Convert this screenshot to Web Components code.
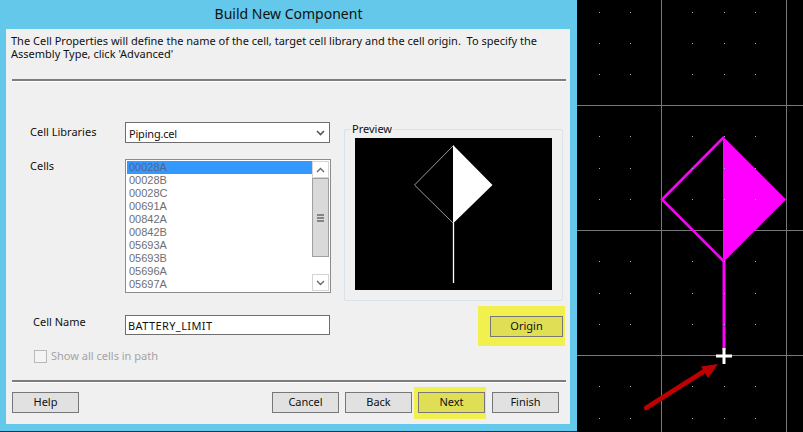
<!DOCTYPE html>
<html>
<head>
<meta charset="utf-8">
<title>Build New Component</title>
<style>
  html, body { margin: 0; padding: 0; background: #2a2a2a; }
  body { font: 11px/13px "Noto Sans", "Open Sans", sans-serif; color: #111; overflow: hidden; }
</style>
</head>
<body>
<x-app>
  <x-dialog title="Build New Component">
    <span slot="intro">The Cell Properties will define the name of the cell, target cell library and the cell origin.&nbsp; To specify the<br>Assembly Type, click 'Advanced'</span>

    <x-field slot="left" label="Cell Libraries" style="height:21px;margin-bottom:16px;--label-top:3px"><x-select>Piping.cel</x-select></x-field>
    <x-field slot="left" label="Cells" style="height:134px;margin-bottom:22px;--label-top:0px">
      <x-listbox>
        <x-listitem selected>00028A</x-listitem>
        <x-listitem>00028B</x-listitem>
        <x-listitem>00028C</x-listitem>
        <x-listitem>00691A</x-listitem>
        <x-listitem>00842A</x-listitem>
        <x-listitem>00842B</x-listitem>
        <x-listitem>05693A</x-listitem>
        <x-listitem>05693B</x-listitem>
        <x-listitem>05696A</x-listitem>
        <x-listitem>05697A</x-listitem>
      </x-listbox>
    </x-field>
    <x-field slot="left" label="Cell Name" indent style="height:20px;margin-bottom:15px;--label-top:0px"><x-textbox>BATTERY_LIMIT</x-textbox></x-field>
    <x-checkbox slot="left">Show all cells in path</x-checkbox>

    <x-groupbox slot="right" label="Preview"><x-preview></x-preview></x-groupbox>
    <x-highlight slot="right" style="margin:5px 0 0 134px;padding:10px 2px 9px 12px">
      <x-button marked style="width:73px">Origin</x-button>
    </x-highlight>

    <x-button slot="footer" style="margin-right:193px">Help</x-button>
    <x-button slot="footer" style="margin-right:6px">Cancel</x-button>
    <x-button slot="footer" style="margin-right:6px">Back</x-button>
    <x-highlight slot="footer" style="margin:-5px 6px -6px -4px;padding:5px 1px 6px 4px">
      <x-button marked>Next</x-button>
    </x-highlight>
    <x-button slot="footer">Finish</x-button>
  </x-dialog>
  <x-canvas></x-canvas>
</x-app>

<script>
class XApp extends HTMLElement {
  constructor() {
    super();
    this.attachShadow({ mode: 'open' }).innerHTML = `
      <style>
        :host { display: flex; width: 803px; height: 432px; overflow: hidden; }
      </style>
      <slot></slot>`;
  }
}

class XDialog extends HTMLElement {
  constructor() {
    super();
    this.attachShadow({ mode: 'open' }).innerHTML = `
      <style>
        :host {
          display: flex; flex-direction: column; box-sizing: border-box;
          width: 577px; height: 431px; flex: none;
          padding: 0 7px 7px 6px; background: #63c8ea;
        }
        .title {
          height: 29px; line-height: 28px; text-align: center;
          font-size: 14px; color: #111; padding-left: 1px;
        }
        .panel { flex: 1; display: flex; flex-direction: column; background: #f0f0f0; }
        .intro { height: 26px; margin: 5px 5px 0; white-space: nowrap; }
        .rule { height: 2px; background: #7d7d7d; border-bottom: 1px solid #fff; margin: 19px 4px 0 6px; flex: none; }
        .form { flex: 1; display: flex; padding: 40px 0 0 24px; min-height: 0; }
        .left { width: 301px; flex: none; }
        .right { margin: 7px 0 0 13px; width: 221px; flex: none; }
        .footer { display: flex; height: 21px; padding: 9px 0 11px 6px; }
      </style>
      <div class="title">${this.getAttribute('title')}</div>
      <div class="panel">
        <div class="intro"><slot name="intro"></slot></div>
        <div class="rule"></div>
        <div class="form">
          <div class="left"><slot name="left"></slot></div>
          <div class="right"><slot name="right"></slot></div>
        </div>
        <div class="rule" style="margin-top:0"></div>
        <div class="footer"><slot name="footer"></slot></div>
      </div>`;
  }
}

class XField extends HTMLElement {
  constructor() {
    super();
    const pad = this.hasAttribute('indent') ? 3 : 0;
    this.attachShadow({ mode: 'open' }).innerHTML = `
      <style>
        :host { display: flex; }
        .label { width: ${95 - pad}px; margin-left: ${pad}px; padding-top: var(--label-top, 0); flex: none; }
        .control { width: 206px; height: 100%; }
      </style>
      <div class="label">${this.getAttribute('label')}</div>
      <div class="control"><slot></slot></div>`;
  }
}

class XSelect extends HTMLElement {
  constructor() {
    super();
    this.attachShadow({ mode: 'open' }).innerHTML = `
      <style>
        :host {
          display: flex; align-items: center; justify-content: space-between; box-sizing: border-box;
          width: 205px; height: 21px; padding: 1px 4px 0 3px;
          background: #fff; border: 1px solid #6e6e6e; letter-spacing: -.2px;
        }
        svg { display: block; }
      </style>
      <span><slot></slot></span>
      <svg width="9" height="6" viewBox="0 0 9 6"><path d="M1 1l3.5 3.5L8 1" fill="none" stroke="#555" stroke-width="1.6"/></svg>`;
  }
}

class XListbox extends HTMLElement {
  constructor() {
    super();
    this.attachShadow({ mode: 'open' }).innerHTML = `
      <style>
        :host {
          display: flex; box-sizing: border-box; width: 206px; height: 134px;
          padding: 1px; background: #fff; border: 1px solid #8c8c8c;
        }
        .items { flex: 1; min-width: 0; }
        .bar { width: 17px; flex: none; display: flex; flex-direction: column; }
        .btn { height: 17px; box-sizing: border-box; display: flex; align-items: center; justify-content: center; border: 1px solid #d4d4d4; }
        .thumb {
          height: 79px; box-sizing: border-box; background: #d9d9d9; border: 1px solid #a0a0a0;
          display: flex; align-items: center; justify-content: center;
        }
        .track { flex: 1; }
        svg { display: block; }
      </style>
      <div class="items"><slot></slot></div>
      <div class="bar">
        <div class="btn"><svg width="9" height="6" viewBox="0 0 9 6"><path d="M1 5l3.5-3.5L8 5" fill="none" stroke="#666" stroke-width="1.3"/></svg></div>
        <div class="thumb"><svg width="7" height="8" viewBox="0 0 7 8"><path d="M0 1h7M0 4h7M0 7h7" stroke="#6a6a6a" stroke-width="1.6"/></svg></div>
        <div class="track"></div>
        <div class="btn"><svg width="9" height="6" viewBox="0 0 9 6"><path d="M1 1l3.5 3.5L8 1" fill="none" stroke="#666" stroke-width="1.3"/></svg></div>
      </div>`;
  }
}

class XListitem extends HTMLElement {
  constructor() {
    super();
    this.attachShadow({ mode: 'open' }).innerHTML = `
      <style>
        :host {
          display: block; height: 13px; line-height: 13px; padding-left: 2px;
          font-family: "Liberation Sans", sans-serif; font-size: 11px; color: #6f6f72;
        }
        :host([selected]) { background: #3399ff; color: #56657d; }
      </style>
      <slot></slot>`;
  }
}

class XTextbox extends HTMLElement {
  constructor() {
    super();
    this.attachShadow({ mode: 'open' }).innerHTML = `
      <style>
        :host {
          display: flex; align-items: center; box-sizing: border-box;
          width: 205px; height: 20px; padding: 1px 0 0 2px;
          background: #fff; border: 1px solid #6e6e6e; letter-spacing: .4px;
        }
      </style>
      <slot></slot>`;
  }
}

class XCheckbox extends HTMLElement {
  constructor() {
    super();
    this.attachShadow({ mode: 'open' }).innerHTML = `
      <style>
        :host { display: flex; align-items: center; height: 13px; margin-left: 4px; color: #a3a3a3; }
        .box { width: 13px; height: 13px; box-sizing: border-box; border: 1px solid #b9b9b9; background: #f4f4f4; margin-right: 4px; flex: none; }
        span { margin-top: -2px; }
      </style>
      <div class="box"></div>
      <span><slot></slot></span>`;
  }
}

class XGroupbox extends HTMLElement {
  constructor() {
    super();
    this.attachShadow({ mode: 'open' }).innerHTML = `
      <style>
        :host { display: block; width: 219px; height: 172px; position: relative; box-sizing: border-box; border: 1px solid #d8e2e8; border-radius: 2px; }
        .label { position: absolute; left: 6px; top: -8px; padding: 0 1px; background: #f0f0f0; }
        .body { padding: 8px 10px 10px 10px; }
      </style>
      <div class="label">${this.getAttribute('label')}</div>
      <div class="body"><slot></slot></div>`;
  }
}

class XPreview extends HTMLElement {
  constructor() {
    super();
    this.attachShadow({ mode: 'open' }).innerHTML = `
      <style>
        :host { display: block; width: 197px; height: 152px; background: #000; }
        svg { display: block; }
      </style>
      <svg width="197" height="152" viewBox="0 0 197 152">
        <path d="M98.5 7.5L59.5 47l39 38.5" fill="none" stroke="#9a9a9a" stroke-width="1"/>
        <path d="M98 7L137.500 47 98 85.500z" fill="#fff"/>
        <path d="M98.500 85V145" stroke="#fff" stroke-width="1.300"/>
      </svg>`;
  }
}

class XHighlight extends HTMLElement {
  constructor() {
    super();
    this.attachShadow({ mode: 'open' }).innerHTML = `
      <style>
        :host { display: block; width: fit-content; background: #f2f04e; }
      </style>
      <slot></slot>`;
  }
}

class XButton extends HTMLElement {
  constructor() {
    super();
    this.attachShadow({ mode: 'open' }).innerHTML = `
      <style>
        :host {
          display: flex; align-items: center; justify-content: center; box-sizing: border-box;
          width: 67px; height: 21px; flex: none; padding-bottom: 2px;
          background: #e1e1e1; border: 1px solid #777; color: #111;
        }
        :host([marked]) { background: #dfde55; }
      </style>
      <slot></slot>`;
  }
}

// Free CAD canvas: coordinates are the content itself, so everything is one svg
class XCanvas extends HTMLElement {
  constructor() {
    super();
    const xs = [22, 53, 115, 147, 178];
    const ys = [12, 43, 74, 136, 168, 199, 261, 293, 324, 386, 418];
    let dots = '';
    ys.forEach(y => xs.forEach(x => { dots += `<rect x="${x}" y="${y}" width="1" height="1"/>`; }));
    this.attachShadow({ mode: 'open' }).innerHTML = `
      <style>
        :host { display: block; width: 226px; height: 432px; flex: none; background: #000; }
        svg { display: block; }
      </style>
      <svg width="226" height="432" viewBox="0 0 226 432">
        <g stroke="#777" stroke-width="1">
          <path d="M84.500 0V432M209.500 0V432M0 105.500H226M0 230.500H226M0 355.500H226"/>
        </g>
        <path d="M147 137L85 199.500l62 62" fill="none" stroke="#f0f" stroke-width="2.500"/>
        <path d="M146 136.500L209 199.500 146 262.500z" fill="#f0f"/>
        <path d="M147 260V350" stroke="#f0f" stroke-width="3"/>
        <g fill="#a8a8a8">${dots}</g>
        <path d="M147 348V364M139 356H155" stroke="#fff" stroke-width="3"/>
        <path d="M69 408L129 370" stroke="#c00000" stroke-width="4.500" stroke-linecap="round"/>
        <path d="M141 364L124 366.500 131 378z" fill="#c00000"/>
      </svg>`;
  }
}

customElements.define('x-app', XApp);
customElements.define('x-dialog', XDialog);
customElements.define('x-field', XField);
customElements.define('x-select', XSelect);
customElements.define('x-listbox', XListbox);
customElements.define('x-listitem', XListitem);
customElements.define('x-textbox', XTextbox);
customElements.define('x-checkbox', XCheckbox);
customElements.define('x-groupbox', XGroupbox);
customElements.define('x-preview', XPreview);
customElements.define('x-highlight', XHighlight);
customElements.define('x-button', XButton);
customElements.define('x-canvas', XCanvas);
</script>
</body>
</html>
